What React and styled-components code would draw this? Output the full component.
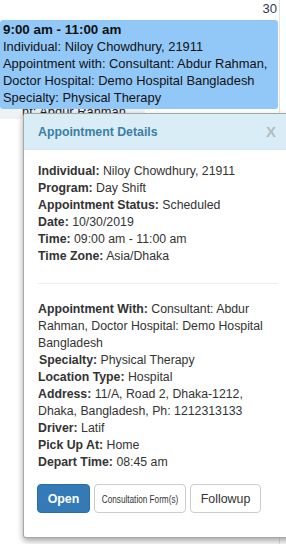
import React from "react";
import styled, { createGlobalStyle } from "styled-components";

const GlobalStyle = createGlobalStyle`
  html, body {
    margin: 0;
    padding: 0;
    background: #fff;
  }
  body {
    width: 286px;
    height: 544px;
    overflow: hidden;
    font-family: "Liberation Sans", Arial, sans-serif;
    color: #333;
  }
`;

const firstSection = [
  ["Individual:", "Niloy Chowdhury, 21911"],
  ["Program:", "Day Shift"],
  ["Appointment Status:", "Scheduled"],
  ["Date:", "10/30/2019"],
  ["Time:", "09:00 am - 11:00 am"],
  ["Time Zone:", "Asia/Dhaka"],
];

const secondSection = [
  ["Appointment With:", "Consultant: Abdur Rahman, Doctor Hospital: Demo Hospital Bangladesh"],
  ["Specialty:", "Physical Therapy", true],
  ["Location Type:", "Hospital"],
  ["Address:", "11/A, Road 2, Dhaka-1212, Dhaka, Bangladesh, Ph: 1212313133"],
  ["Driver:", "Latif"],
  ["Pick Up At:", "Home"],
  ["Depart Time:", "08:45 am"],
];

const App = () => {
  return (
    <>
      <GlobalStyle />
      <Page>
        <DayCell>
          <DayNumber>30</DayNumber>
          <EventBlock>
            <EventTime>9:00 am - 11:00 am</EventTime>
            <div>Individual: Niloy Chowdhury, 21911</div>
            <div>Appointment with: Consultant: Abdur Rahman, Doctor Hospital: Demo Hospital Bangladesh</div>
            <div>Specialty: Physical Therapy</div>
          </EventBlock>
          <HiddenEvent>nt: Abdur Rahman.</HiddenEvent>
        </DayCell>

        <Popover>
          <PopoverHeader>
            <PopoverTitle>Appointment Details</PopoverTitle>
            <CloseX>X</CloseX>
          </PopoverHeader>
          <PopoverBody>
            <Section>
              {firstSection.map(([label, value]) => (
                <Line key={label}>
                  <b>{label}</b> {value}
                </Line>
              ))}
            </Section>
            <Divider />
            <Section>
              {secondSection.map(([label, value, indent]) => (
                <Line key={label} $indent={indent}>
                  <b>{label}</b> {value}
                </Line>
              ))}
            </Section>
            <Buttons>
              <Button $kind="primary">Open</Button>
              <Button $kind="narrow">
                <Squeeze>Consultation Form(s)</Squeeze>
              </Button>
              <Button>Followup</Button>
            </Buttons>
          </PopoverBody>
        </Popover>
      </Page>
    </>
  );
};

const Page = styled.div`
  position: relative;
  width: 286px;
  height: 544px;
  overflow: hidden;
`;

const DayCell = styled.div`
  width: 279px;
  height: 544px;
  border-right: 1px solid #e3e3e3;
  display: flex;
  flex-direction: column;
`;

const DayNumber = styled.div`
  height: 20px;
  text-align: right;
  padding-right: 2px;
  box-sizing: border-box;
  font-size: 13px;
  line-height: 17px;
  color: #34384a;
`;

const EventBlock = styled.div`
  position: relative;
  z-index: 1;
  height: 89px;
  box-sizing: border-box;
  margin: 0 1px 0 0;
  padding: 1px 2px 0 3px;
  background: #92c8f7;
  border-radius: 3px;
  font-size: 12.9px;
  line-height: 17px;
  color: #111;
  overflow: visible;
`;

const EventTime = styled.div`
  font-weight: bold;
  font-size: 13.4px;
`;

const HiddenEvent = styled.div`
  margin: -4px 0 0 0;
  padding-left: 22px;
  width: 145px;
  box-sizing: border-box;
  background: #eef2f5;
  font-size: 12.9px;
  line-height: 14px;
  color: #222;
`;

const Popover = styled.div`
  position: absolute;
  z-index: 2;
  top: 113px;
  left: 23px;
  width: 272px;
  background: #fff;
  border: 1px solid rgba(0, 0, 0, 0.35);
  border-radius: 3px;
  box-shadow: 0 3px 6px rgba(0, 0, 0, 0.35);
  font-size: 12.3px;
  color: #333;
`;

const PopoverHeader = styled.div`
  height: 35px;
  display: flex;
  align-items: center;
  justify-content: space-between;
  padding: 0 20px 0 14px;
  background: #d9edf7;
  border-bottom: 1px solid #cfe6f2;
`;

const PopoverTitle = styled.div`
  font-weight: bold;
  color: #3b7fa5;
  font-size: 12.3px;
`;

const CloseX = styled.div`
  font-size: 15px;
  font-weight: bold;
  color: #b3bcc2;
`;

const PopoverBody = styled.div`
  padding: 13px 18px 24px 14px;
`;

const Section = styled.div`
  display: flex;
  flex-direction: column;
`;

const Line = styled.div`
  line-height: 17px;
  padding-left: ${(p) => (p.$indent ? "1px" : "0")};
  b {
    font-weight: bold;
  }
`;

const Divider = styled.div`
  height: 1px;
  background: #eeeeee;
  margin: 18px 0 17px 0;
`;

const Buttons = styled.div`
  display: flex;
  gap: 4px;
  margin-top: 13px;
  margin-left: -1px;
`;

const Button = styled.button`
  height: 29px;
  padding: 0;
  border-radius: 4px;
  font-family: "Liberation Sans", Arial, sans-serif;
  font-size: 12.4px;
  font-weight: ${(p) => (p.$kind === "primary" ? "bold" : "normal")};
  color: ${(p) => (p.$kind === "primary" ? "#fff" : "#333")};
  background: ${(p) => (p.$kind === "primary" ? "#337ab7" : "#fff")};
  border: 1px solid ${(p) => (p.$kind === "primary" ? "#2e6da4" : "#ccc")};
  width: ${(p) =>
    p.$kind === "primary" ? "53px" : p.$kind === "narrow" ? "92px" : "71px"};
  display: flex;
  align-items: center;
  justify-content: center;
  overflow: hidden;
  cursor: pointer;
`;

const Squeeze = styled.span`
  display: inline-block;
  font-size: 10.5px;
  white-space: nowrap;
  transform: scaleX(0.78);
`;

export default App;
